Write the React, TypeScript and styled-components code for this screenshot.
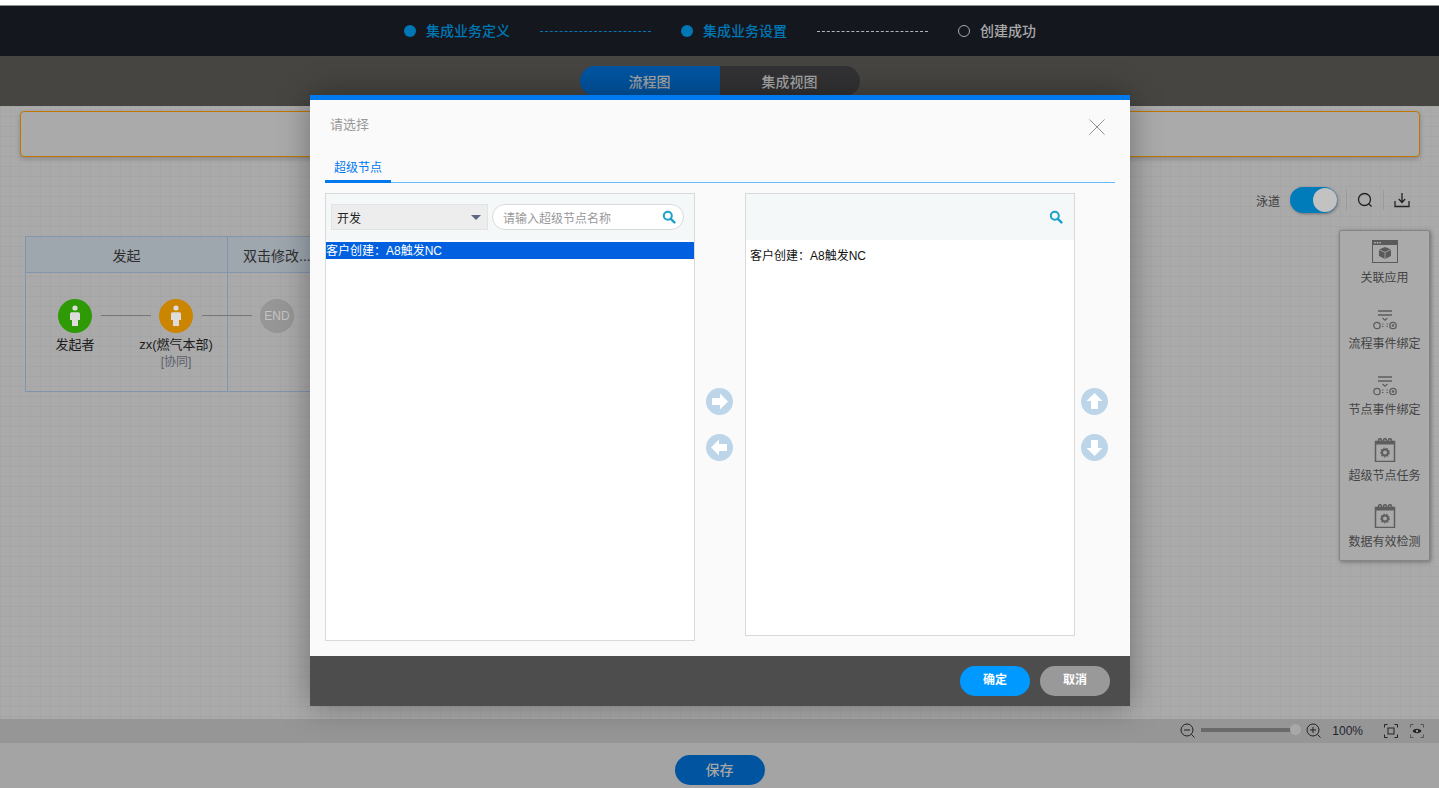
import React from "react";
import styled, { createGlobalStyle } from "styled-components";

const Global = createGlobalStyle`
  html, body { margin: 0; padding: 0; background: #fff; }
  body { font-family: "Liberation Sans", "Noto Sans CJK SC", sans-serif; font-size: 12px; }
  * { box-sizing: border-box; }
`;

const Page = styled.div`
  position: relative;
  width: 1439px;
  height: 788px;
  overflow: hidden;
  display: flex;
  flex-direction: column;
  padding-top: 5px;
  background: #fff;
`;

const Header = styled.header`
  height: 51px;
  flex: none;
  border-top: 1px solid #8f8f8f;
  background: #14171e;
  display: flex;
  align-items: center;
  justify-content: center;
  padding-left: 1px;
`;

const Step = styled.div<{ $tone: "blue" | "grey" }>`
  display: flex;
  align-items: center;
  gap: 10px;
  font-size: 14px;
  font-weight: 500;
  line-height: 20px;
  color: ${(p) => (p.$tone === "blue" ? "#0077b5" : "#a9a9a9")};
`;

const StepDot = styled.span<{ $hollow?: boolean }>`
  width: 12px;
  height: 12px;
  border-radius: 50%;
  background: ${(p) => (p.$hollow ? "transparent" : "#0077b5")};
  border: ${(p) => (p.$hollow ? "1px solid #a9a9a9" : "none")};
`;

const StepLine = styled.span<{ $tone: "blue" | "white" }>`
  width: 111px;
  margin: 0 30px;
  border-top: 1px dashed ${(p) => (p.$tone === "blue" ? "#0077b5" : "#b5b5b5")};
`;

const SubBar = styled.div`
  height: 50px;
  flex: none;
  background: #464541;
  display: flex;
  justify-content: center;
  padding-top: 10px;
`;

const Tab = styled.div<{ $active?: boolean }>`
  width: 140px;
  height: 30px;
  display: flex;
  align-items: center;
  justify-content: center;
  font-size: 14px;
  font-weight: 500;
  color: #a6a6a6;
  background: ${(p) => (p.$active ? "#0054a0" : "#323234")};
  border-radius: ${(p) => (p.$active ? "15px 0 0 15px" : "0 15px 15px 0")};
`;

const Canvas = styled.main`
  position: relative;
  flex: 1;
  padding: 5px 19px 0 20px;
  background-color: #aaaaaa;
  background-image:
    linear-gradient(rgba(0, 0, 0, 0.025) 1px, transparent 1px),
    linear-gradient(90deg, rgba(0, 0, 0, 0.025) 1px, transparent 1px);
  background-size: 10px 10px;
`;

const Notice = styled.div`
  height: 46px;
  border: 1px solid #c07600;
  border-radius: 4px;
  box-shadow: 0 2px 5px rgba(0, 0, 0, 0.2);
  background: #aaaaaa;
`;

const Tools = styled.div`
  position: absolute;
  top: 81px;
  right: 19px;
  height: 26px;
  display: flex;
  align-items: center;
  color: #333;
`;

const ToolLabel = styled.span`
  font-size: 12px;
  color: #3c3c3c;
  margin-right: 10px;
`;

const Toggle = styled.span`
  position: relative;
  width: 47px;
  height: 26px;
  border-radius: 13px;
  background: #007cbb;
  box-shadow: 1px 1px 3px rgba(0, 0, 0, 0.35);
  margin-right: 9px;
  &::after {
    content: "";
    position: absolute;
    top: 1px;
    right: 0;
    width: 24px;
    height: 24px;
    border-radius: 50%;
    background: #c2c2c2;
  }
`;

const ToolSep = styled.span`
  width: 1px;
  height: 20px;
  background: #9a9a9a;
`;

const ToolIcon = styled.svg`
  display: block;
  margin: 0 10px;
`;

const Lanes = styled.div`
  position: absolute;
  left: 25px;
  top: 130px;
  width: 400px;
  height: 156px;
  display: grid;
  grid-template-columns: 202px 1fr;
  grid-template-rows: 36px 1fr;
  border: 1px solid #8295aa;
`;

const LaneHead = styled.div<{ $first?: boolean }>`
  display: flex;
  align-items: center;
  padding-left: ${(p) => (p.$first ? "0" : "15px")};
  justify-content: ${(p) => (p.$first ? "center" : "flex-start")};
  background: #9ea6ae;
  font-size: 14px;
  color: #2f2f2f;
  border-bottom: 1px solid #8295aa;
  border-right: ${(p) => (p.$first ? "1px solid #8295aa" : "none")};
`;

const LaneBody = styled.div<{ $first?: boolean }>`
  border-right: ${(p) => (p.$first ? "1px solid #8295aa" : "none")};
`;

const Node = styled.div<{ $x: number }>`
  position: absolute;
  top: 62px;
  left: ${(p) => p.$x}px;
  width: 100px;
  margin-left: -50px;
  display: flex;
  flex-direction: column;
  align-items: center;
  font-size: 13px;
  line-height: 17px;
  color: #1c1c1c;
  white-space: nowrap;
`;

const NodeDisc = styled.div<{ $bg: string }>`
  width: 34px;
  height: 34px;
  border-radius: 50%;
  background: ${(p) => p.$bg};
  display: flex;
  align-items: center;
  justify-content: center;
  color: #c4c4c4;
  font-size: 12px;
  margin-bottom: 3px;
`;

const NodeRole = styled.div`
  font-size: 12px;
  line-height: 18px;
  color: #5b5f6a;
`;

const Wire = styled.div<{ $x: number }>`
  position: absolute;
  top: 78px;
  left: ${(p) => p.$x}px;
  width: 50px;
  border-top: 1px solid #787878;
`;

const Palette = styled.aside`
  position: absolute;
  top: 124px;
  right: 9px;
  width: 91px;
  height: 331px;
  padding-top: 9px;
  background: #aaaaaa;
  border: 1px solid #858585;
  border-radius: 2px;
  box-shadow: 1px 1px 4px rgba(0, 0, 0, 0.35);
  display: flex;
  flex-direction: column;
`;

const PaletteItem = styled.div`
  height: 66px;
  flex: none;
  display: flex;
  flex-direction: column;
  align-items: center;
  justify-content: flex-start;
  gap: 5px;
  font-size: 12px;
  line-height: 18px;
  color: #444;
  white-space: nowrap;
`;

const PaletteIcon = styled.svg`
  display: block;
  flex: none;
`;

const ZoomBar = styled.div`
  height: 24px;
  flex: none;
  background: #969696;
  display: flex;
  align-items: center;
  justify-content: flex-end;
  padding-right: 15px;
  color: #222;
`;

const Slider = styled.div`
  position: relative;
  width: 90px;
  height: 4px;
  margin: -2px 15px 0 5px;
  background: #6a6a6a;
  &::after {
    content: "";
    position: absolute;
    right: -10px;
    top: -4px;
    width: 11px;
    height: 11px;
    border-radius: 50%;
    background: #a8a8a8;
  }
`;

const Percent = styled.span`
  font-size: 12px;
  color: #1f2430;
  margin: 0 21px 0 10px;
`;

const BarIcon = styled.svg<{ $gap?: number }>`
  display: block;
  margin-right: ${(p) => p.$gap ?? 0}px;
`;

const Bottom = styled.div`
  height: 45px;
  flex: none;
  background: #a4a4a4;
  display: flex;
  justify-content: center;
  padding-top: 12px;
`;

const SaveButton = styled.button`
  width: 90px;
  height: 30px;
  border: 0;
  padding: 0 0 2px;
  border-radius: 15px;
  background: #0054a0;
  color: #a6a6a6;
  font: 500 14px "Liberation Sans", "Noto Sans CJK SC", sans-serif;
`;

const Modal = styled.section`
  position: absolute;
  left: 310px;
  top: 95px;
  width: 820px;
  height: 611px;
  display: flex;
  flex-direction: column;
  background: #fafafa;
  border-top: 5px solid #0078ee;
  box-shadow: 0 0 30px rgba(0, 0, 0, 0.35);
`;

const ModalTitle = styled.div`
  height: 55px;
  flex: none;
  padding: 15px 25px 0 20px;
  display: flex;
  justify-content: space-between;
  align-items: flex-start;
  font-size: 13px;
  line-height: 20px;
  color: #999;
`;

const CloseIcon = styled.svg`
  display: block;
  margin-top: 4px;
`;

const TabRow = styled.div`
  height: 28px;
  flex: none;
  margin: 0 15px;
  border-bottom: 1px solid #66bbff;
  display: flex;
`;

const TabLabel = styled.div`
  width: 66px;
  height: 28px;
  border-bottom: 3px solid #0078ee;
  display: flex;
  align-items: flex-start;
  justify-content: center;
  padding-top: 4px;
  font-size: 12px;
  line-height: 18px;
  color: #0078ee;
`;

const Transfer = styled.div`
  flex: 1;
  padding: 10px 15px 0;
  display: flex;
  align-items: flex-start;
`;

const ListBox = styled.div<{ $w: number; $h: number }>`
  width: ${(p) => p.$w}px;
  height: ${(p) => p.$h}px;
  flex: none;
  border: 1px solid #d9d9d9;
  background: #fff;
  display: flex;
  flex-direction: column;
`;

const ListTools = styled.div`
  height: 46px;
  flex: none;
  background: #f5f8f9;
  display: flex;
  align-items: center;
  gap: 4px;
  padding: 0 10px 0 5px;
`;

const ListToolsEnd = styled(ListTools)`
  justify-content: flex-end;
  padding-right: 11px;
`;

const SelectBox = styled.div`
  width: 157px;
  height: 26px;
  border: 1px solid #e3e3e3;
  background: #eeeded;
  display: flex;
  align-items: center;
  justify-content: space-between;
  padding: 0 6px 0 5px;
  font-size: 12px;
  color: #222;
  &::after {
    content: "";
    border-style: solid;
    border-width: 5px 5.5px 0;
    border-color: #5f6880 transparent transparent;
  }
`;

const SearchBox = styled.div`
  flex: 1;
  height: 26px;
  border: 1px solid #d9d9d9;
  border-radius: 13px;
  background: #fff;
  display: flex;
  align-items: center;
  justify-content: space-between;
  padding: 0 7px 0 10px;
  font-size: 12px;
  color: #999;
`;

const Option = styled.div<{ $selected?: boolean }>`
  height: 17px;
  margin-top: ${(p) => (p.$selected ? "2px" : "8px")};
  padding-left: ${(p) => (p.$selected ? "0" : "4px")};
  line-height: ${(p) => (p.$selected ? "19px" : "17px")};
  font-size: 12px;
  color: ${(p) => (p.$selected ? "#fff" : "#111")};
  background: ${(p) => (p.$selected ? "#0060e0" : "transparent")};
  white-space: nowrap;
`;

const ArrowColumn = styled.div<{ $w: number }>`
  flex: none;
  width: ${(p) => p.$w}px;
  height: 442px;
  padding: 20px 1px 0 0;
  display: flex;
  flex-direction: column;
  align-items: center;
  justify-content: center;
  gap: 19px;
`;

const ArrowIcon = styled.svg`
  display: block;
`;

const Footer = styled.footer`
  height: 50px;
  flex: none;
  background: #4d4d4d;
  display: flex;
  justify-content: flex-end;
  align-items: center;
  gap: 10px;
  padding-right: 20px;
`;

const FootButton = styled.button<{ $primary?: boolean }>`
  width: 70px;
  height: 30px;
  border: 0;
  padding: 0 0 6px;
  border-radius: 15px;
  color: #fff;
  background: ${(p) => (p.$primary ? "#0099ff" : "#999")};
  font: 700 12px "Liberation Sans", "Noto Sans CJK SC", sans-serif;
`;

const Person = () => (
  <svg width="12" height="22" viewBox="0 0 12 22" aria-hidden>
    <circle cx="6" cy="3" r="2.6" fill="#dcdcdc" />
    <path d="M2.600 7.200h6.800a1.600 1.600 0 0 1 1.600 1.600V15H9v6H3v-6H1V8.800a1.600 1.600 0 0 1 1.600-1.600z" fill="#dcdcdc" />
  </svg>
);

const Loupe = ({ color = "#1ea0c8" }: { color?: string }) => (
  <svg width="14" height="14" viewBox="0 0 14 14" aria-hidden>
    <circle cx="5.800" cy="5.800" r="4" fill="none" stroke={color} strokeWidth="2" />
    <path d="M8.800 8.800l3.600 3.600" stroke={color} strokeWidth="2.400" strokeLinecap="round" />
  </svg>
);

const Round = ({ dir }: { dir: "right" | "left" | "up" | "down" }) => {
  const rot = { right: 0, down: 90, left: 180, up: 270 }[dir];
  return (
    <ArrowIcon width="27" height="27" viewBox="0 0 27 27" aria-hidden>
      <circle cx="13.500" cy="13.500" r="13.500" fill="#bcd5e8" />
      <path d="M6 10h8V5.500l8 8-8 8V17H6z" fill="#fff" transform={`rotate(${rot} 13.500 13.500)`} />
    </ArrowIcon>
  );
};

const WindowIcon = () => (
  <PaletteIcon width="26" height="24" viewBox="0 0 26 24" aria-hidden>
    <rect x="0.500" y="0.500" width="25" height="22" fill="none" stroke="#5a5a5a" />
    <rect x="0.500" y="0.500" width="25" height="4.500" fill="#5a5a5a" />
    <circle cx="3" cy="2.800" r=".8" fill="#ccc" />
    <circle cx="5.500" cy="2.800" r=".8" fill="#ccc" />
    <circle cx="8" cy="2.800" r=".8" fill="#ccc" />
    <path d="M13 7l6 2.600v6.400l-6 3-6-3V9.600z" fill="#5a5a5a" />
    <path d="M7 9.600l6 2.800 6-2.800M13 12.400V19" stroke="#aaa" strokeWidth=".8" fill="none" />
  </PaletteIcon>
);

const EventIcon = () => (
  <PaletteIcon width="26" height="24" viewBox="0 -1.500 26 24" aria-hidden>
    <path d="M6 3.500h14M6 7.500h14" stroke="#5e5e5e" strokeWidth="1.300" />
    <path d="M10.500 10.500l2.500 2.200 2.500-2.200" stroke="#5e5e5e" strokeWidth="1.300" fill="none" />
    <circle cx="5" cy="18" r="3.200" fill="none" stroke="#5e5e5e" strokeWidth="1.300" />
    <circle cx="21" cy="18" r="3.200" fill="none" stroke="#5e5e5e" strokeWidth="1.300" />
    <circle cx="21" cy="18" r="1.300" fill="#5e5e5e" />
    <path d="M10 16.500h1.500M10 19h1.500M14.500 16.500h1.500M14.500 19h1.500" stroke="#5e5e5e" />
  </PaletteIcon>
);

const PlanIcon = () => (
  <PaletteIcon width="22" height="24" viewBox="0 0 22 24" aria-hidden>
    <rect x="1.500" y="3.500" width="19" height="20" fill="none" stroke="#5e5e5e" strokeWidth="1.500" />
    <path d="M1 3.500h20v3H1z" fill="#5e5e5e" />
    <path d="M4.500 5V2.200a1.500 1.500 0 0 1 3 0V5M9.500 5V2.200a1.500 1.500 0 0 1 3 0V5M14.500 5V2.200a1.500 1.500 0 0 1 3 0V5" fill="none" stroke="#5e5e5e" strokeWidth="1.500" />
    <circle cx="11" cy="14.500" r="3" fill="none" stroke="#5e5e5e" strokeWidth="2" />
    <circle cx="11" cy="14.500" r="4.300" fill="none" stroke="#5e5e5e" strokeWidth="1.200" strokeDasharray="1.500 1.500" />
  </PaletteIcon>
);

const palette = [
  { label: "关联应用", Icon: WindowIcon },
  { label: "流程事件绑定", Icon: EventIcon },
  { label: "节点事件绑定", Icon: EventIcon },
  { label: "超级节点任务", Icon: PlanIcon },
  { label: "数据有效检测", Icon: PlanIcon },
];

export default function App() {
  return (
    <Page>
      <Global />
      <Header>
        <Step $tone="blue"><StepDot />集成业务定义</Step>
        <StepLine $tone="blue" />
        <Step $tone="blue"><StepDot />集成业务设置</Step>
        <StepLine $tone="white" />
        <Step $tone="grey"><StepDot $hollow />创建成功</Step>
      </Header>
      <SubBar>
        <Tab $active>流程图</Tab>
        <Tab>集成视图</Tab>
      </SubBar>
      <Canvas>
        <Notice />
        <Tools>
          <ToolLabel>泳道</ToolLabel>
          <Toggle />
          <ToolSep />
          <ToolIcon width="16" height="16" viewBox="0 0 16 16" aria-hidden>
            <circle cx="7.500" cy="7.500" r="6" fill="none" stroke="#222" strokeWidth="1.300" />
            <path d="M11.500 11.500l3 3" stroke="#222" strokeWidth="1.300" />
          </ToolIcon>
          <ToolSep />
          <ToolIcon width="16" height="16" viewBox="0 0 16 16" aria-hidden>
            <path d="M1 9v5.500h14V9" fill="none" stroke="#222" strokeWidth="1.300" />
            <path d="M8 1v9M4.800 7L8 10.500 11.200 7" fill="none" stroke="#222" strokeWidth="1.300" />
          </ToolIcon>
        </Tools>
        <Lanes>
          <LaneHead $first>发起</LaneHead>
          <LaneHead>双击修改...</LaneHead>
          <LaneBody $first />
          <LaneBody />
          <Node $x={49}>
            <NodeDisc $bg="#2e9a06"><Person /></NodeDisc>
            发起者
          </Node>
          <Wire $x={75} />
          <Node $x={150}>
            <NodeDisc $bg="#cc8500"><Person /></NodeDisc>
            zx(燃气本部)
            <NodeRole>[协同]</NodeRole>
          </Node>
          <Wire $x={176} />
          <Node $x={251}>
            <NodeDisc $bg="#969696">END</NodeDisc>
          </Node>
        </Lanes>
        <Palette>
          {palette.map(({ label, Icon }) => (
            <PaletteItem key={label}>
              <Icon />
              {label}
            </PaletteItem>
          ))}
        </Palette>
      </Canvas>
      <ZoomBar>
        <BarIcon width="16" height="16" viewBox="0 0 16 16" aria-hidden>
          <circle cx="7" cy="7" r="6" fill="none" stroke="#222" />
          <path d="M4 7h6M11.500 11.500l3 3" stroke="#222" />
        </BarIcon>
        <Slider />
        <BarIcon width="16" height="16" viewBox="0 0 16 16" aria-hidden>
          <circle cx="7" cy="7" r="6" fill="none" stroke="#222" />
          <path d="M4 7h6M7 4v6M11.500 11.500l3 3" stroke="#222" />
        </BarIcon>
        <Percent>100%</Percent>
        <BarIcon $gap={12} width="14" height="14" viewBox="0 0 14 14" aria-hidden>
          <path d="M3.500.500h-3v3M10.500.500h3v3M13.500 10.500v3h-3M3.500 13.500h-3v-3" fill="none" stroke="#222" />
          <rect x="4" y="4" width="6" height="6" fill="none" stroke="#222" />
        </BarIcon>
        <BarIcon width="14" height="14" viewBox="0 0 14 14" aria-hidden>
          <path d="M3.500.500h-3v3M10.500.500h3v3M13.500 10.500v3h-3M3.500 13.500h-3v-3" fill="none" stroke="#555" />
          <path d="M2.500 7C4.500 4 9.500 4 11.500 7 9.500 10 4.500 10 2.500 7z" fill="#222" />
          <circle cx="7" cy="7" r="1.200" fill="#999" />
        </BarIcon>
      </ZoomBar>
      <Bottom>
        <SaveButton>保存</SaveButton>
      </Bottom>

      <Modal>
        <ModalTitle>
          请选择
          <CloseIcon width="16" height="16" viewBox="0 0 16 16" aria-hidden>
            <path d="M0.500.500l15 15M15.500.500l-15 15" stroke="#666" strokeWidth=".7" />
          </CloseIcon>
        </ModalTitle>
        <TabRow><TabLabel>超级节点</TabLabel></TabRow>
        <Transfer>
          <ListBox $w={370} $h={448}>
            <ListTools>
              <SelectBox>开发</SelectBox>
              <SearchBox>请输入超级节点名称<Loupe /></SearchBox>
            </ListTools>
            <Option $selected>客户创建：A8触发NC</Option>
          </ListBox>
          <ArrowColumn $w={50}>
            <Round dir="right" />
            <Round dir="left" />
          </ArrowColumn>
          <ListBox $w={330} $h={443}>
            <ListToolsEnd><Loupe /></ListToolsEnd>
            <Option>客户创建：A8触发NC</Option>
          </ListBox>
          <ArrowColumn $w={40}>
            <Round dir="up" />
            <Round dir="down" />
          </ArrowColumn>
        </Transfer>
        <Footer>
          <FootButton $primary>确定</FootButton>
          <FootButton>取消</FootButton>
        </Footer>
      </Modal>
    </Page>
  );
}
